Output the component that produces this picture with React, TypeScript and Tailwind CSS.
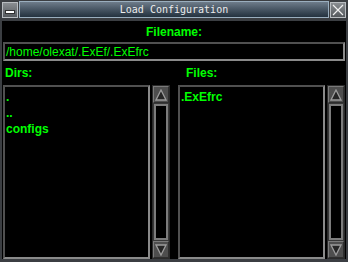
function ScrollBar() {
  return (
    <div className="w-[18px] flex flex-col bg-[#383838] border border-[#2a2a2a]">
      <div className="h-[17px] bg-[#4e4e4e] border border-t-[#7a7a7a] border-l-[#7a7a7a] border-r-[#2e2e2e] border-b-[#2e2e2e] flex items-center justify-center">
        <svg width="12" height="12" viewBox="0 0 12 12">
          <polygon points="6,1 11,11 1,11" fill="#262626" stroke="#9c9c9c" strokeWidth="1.3" />
        </svg>
      </div>
      <div className="flex-1 mx-[1px] my-[1px] border-2 border-[#7c7c7c] bg-black" />
      <div className="h-[17px] bg-[#4e4e4e] border border-t-[#7a7a7a] border-l-[#7a7a7a] border-r-[#2e2e2e] border-b-[#2e2e2e] flex items-center justify-center">
        <svg width="12" height="12" viewBox="0 0 12 12">
          <polygon points="1,1 11,1 6,11" fill="#262626" stroke="#9c9c9c" strokeWidth="1.3" />
        </svg>
      </div>
    </div>
  )
}

function ListBox({ items }: { items: string[] }) {
  return (
    <div className="flex-1 border-2 border-t-[#505050] border-l-[#505050] border-r-[#8a8a8a] border-b-[#8a8a8a] bg-black px-[1px] pt-[2px]">
      {items.map((it) => (
        <div key={it} className="h-[16px] leading-[16px] text-[12px] font-bold text-[#00ff00]">
          {it}
        </div>
      ))}
    </div>
  )
}

export default function App() {
  return (
    <div
      className="w-[348px] h-[262px] bg-[#3b3e42] flex flex-col overflow-hidden"
      style={{ fontFamily: '"Liberation Sans", Arial, sans-serif' }}
    >
      {/* title bar */}
      <div className="h-[18px] flex items-center gap-[1px] px-[2px] pt-[1px]">
        <div className="w-[16px] h-[16px] bg-gradient-to-b from-[#8a8e92] to-[#55595d] border border-[#b8bcc0] flex items-center justify-center">
          <div className="w-[10px] h-[4px] bg-white border border-[#303030] mt-[4px]" />
        </div>
        <div className="flex-1 h-[17px] bg-gradient-to-b from-[#6e7c8a] to-[#24323f] border border-[#9aaebe] flex items-center justify-center">
          <span
            className="text-[10px] text-[#ececec]"
            style={{ fontFamily: '"DejaVu Sans Mono", "Liberation Mono", monospace' }}
          >
            Load Configuration
          </span>
        </div>
        <div className="w-[16px] h-[16px] bg-gradient-to-b from-[#8a8e92] to-[#55595d] border border-[#b8bcc0] flex items-center justify-center">
          <svg width="12" height="12" viewBox="0 0 12 12">
            <path d="M1 1 L11 11 M11 1 L1 11" stroke="#f0f0f0" strokeWidth="1.2" />
          </svg>
        </div>
      </div>

      {/* body */}
      <div className="flex-1 mx-[2px] mt-[3px] mb-[3px] bg-black flex flex-col">
        <div className="h-[21px] flex items-center justify-center text-[12px] font-bold text-[#00ff00] pt-[1px]">
          Filename:
        </div>
        <div className="mx-[1px] h-[19px] border-2 border-t-[#505050] border-l-[#505050] border-r-[#8a8a8a] border-b-[#8a8a8a] flex items-center px-[1px]">
          <span className="text-[12px] text-[#00ff00]">/home/olexat/.ExEf/.ExEfrc</span>
        </div>
        <div className="h-[24px] flex items-center text-[12px] font-bold text-[#00ff00]">
          <span className="pl-[3px] w-[184px]">Dirs:</span>
          <span>Files:</span>
        </div>
        <div className="flex-1 flex pl-[1px] pr-[1px]">
          <div className="w-[167px] flex gap-[2px]">
            <ListBox items={['.', '..', 'configs']} />
            <ScrollBar />
          </div>
          <div className="w-[8px]" />
          <div className="w-[167px] flex gap-[2px]">
            <ListBox items={['.ExEfrc']} />
            <ScrollBar />
          </div>
        </div>
      </div>
    </div>
  )
}
